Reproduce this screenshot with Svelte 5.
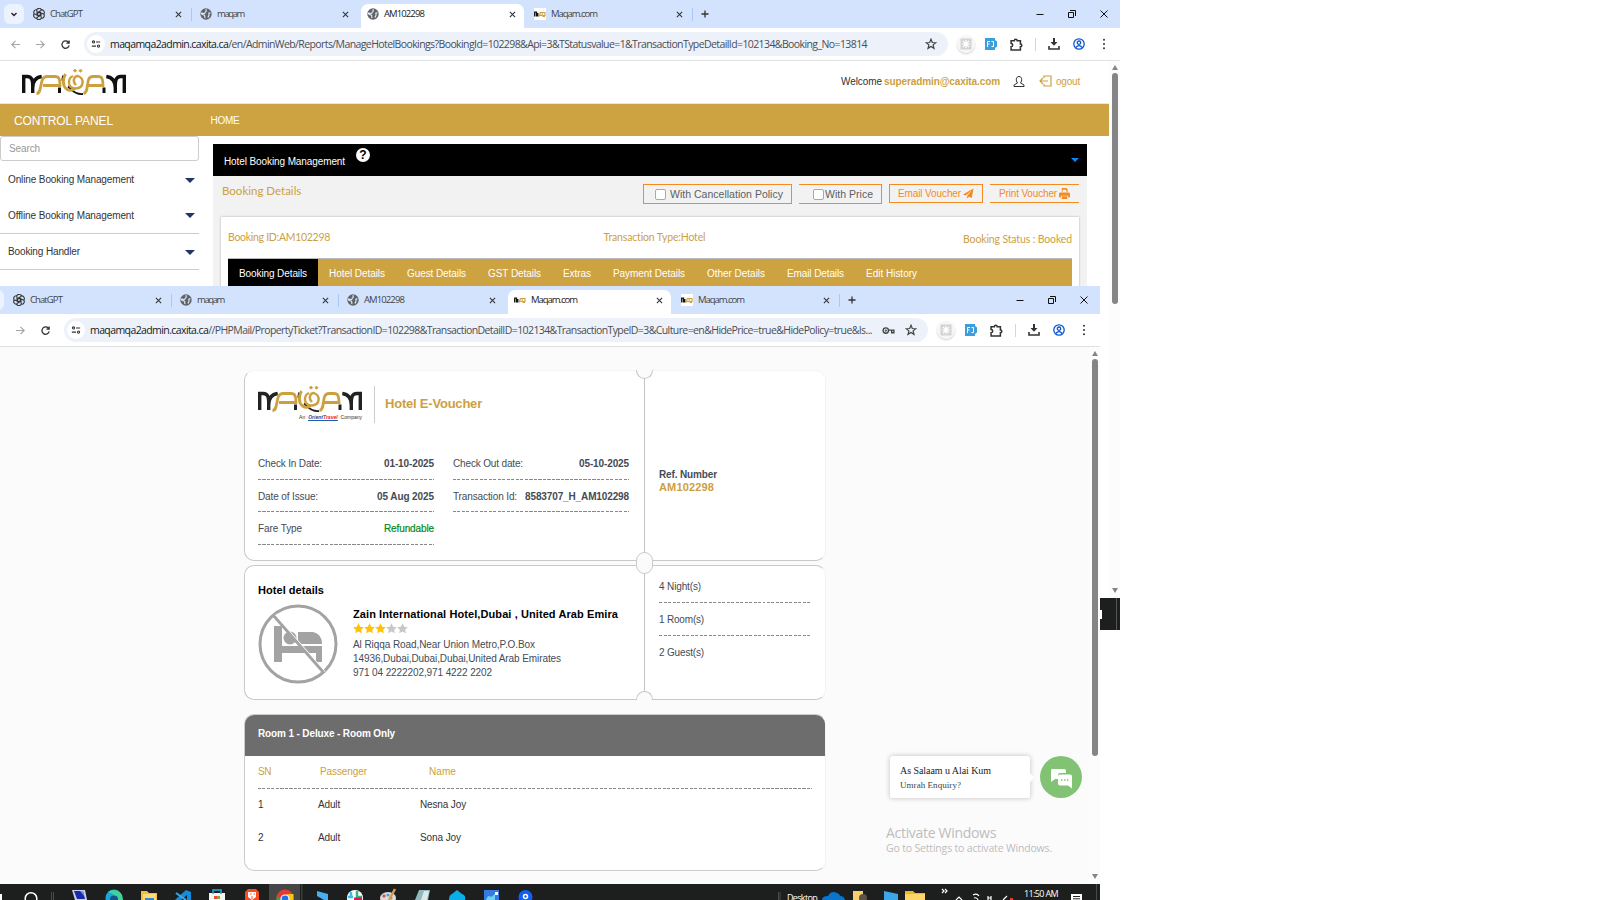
<script>
  const url1 = ['maqamqa2admin.caxita.ca', '/en/AdminWeb/Reports/ManageHotelBookings?BookingId=102298&Api=3&TStatusvalue=1&TransactionTypeDetailId=102134&Booking_No=13814'];
  const url2 = ['maqamqa2admin.caxita.ca', '//PHPMail/PropertyTicket?TransactionID=102298&TransactionDetailID=102134&TransactionTypeID=3&Culture=en&HidePrice=true&HidePolicy=true&Is...'];
  const tabs1 = [
    { t: 'ChatGPT', w: 32, i: 'gpt' }, { t: 'maqam', w: 27, i: 'globe' },
    { t: 'AM102298', w: 40, i: 'globe' }, { t: 'Maqam.com', w: 46, i: 'mq' }
  ];
  const tabs2 = [...tabs1, { t: 'Maqam.com', w: 46, i: 'mq' }];
  const menu = [['Online Booking Management', 126], ['Offline Booking Management', 126], ['Booking Handler', 72]];
  const sections = [['Booking Details', 68], ['Hotel Details', 56], ['Guest Details', 59], ['GST Details', 53], ['Extras', 28], ['Payment Details', 72], ['Other Details', 58], ['Email Details', 57], ['Edit History', 51]];
  const left = [['Check In Date:', '01-10-2025', 64, 50], ['Date of Issue:', '05 Aug 2025', 60, 57], ['Fare Type', 'Refundable', 44, 50]];
  const right = [['Check Out date:', '05-10-2025', 70, 50], ['Transaction Id:', '8583707_H_AM102298', 64, 104]];
  const address = [['Al Riqqa Road,Near Union Metro,P.O.Box', 182], ['14936,Dubai,Dubai,Dubai,United Arab Emirates', 208], ['971 04 2222202,971 4222 2202', 139]];

  // Spreads a label's letters over the given width in pixels.
  function fit(node, width) {
    const gap = width - node.getBoundingClientRect().width;
    node.style.letterSpacing = `${gap / node.textContent.length}px`;
  }
</script>

{#snippet label(text, width, cls = '')}<span class="t {cls}" use:fit={width}>{text}</span>{/snippet}

{#snippet logo(color)}
  <svg class="logo" viewBox="0 0 104 28" fill="none">
    <g stroke={color} stroke-width="3.400">
      <path d="M1.700 24V7.500h3.500c5 0 5.500 4 5.500 10M10.700 24v-5c0-7 3-10.800 9-11.500" />
      <path d="M102.300 24V7.500h-3.500c-5 0-5.500 4-5.500 10M93.300 24v-5c0-7-3-10.800-9-11.500" />
      <path d="M37.500 18.500V24M82 18.500V24" stroke-width="3" />
      <path d="M41.500 6.500c-2 3-1 6 1 9M46 17.500c3 2 6 8.500 15 7.500" stroke-width="1.900" />
    </g>
    <g stroke="#cda03f" stroke-width="2.800">
      <path d="M14.500 24.500c6.500 0 2-17 10.500-17h8c4 0 5 2.500 5 9H21" />
      <path d="M43.500 5c-3 5-3 12 1 15 3 2 6 1.500 8-.5" />
      <path d="M51 7c-5 2-6.500 12 2.500 12.500 9-.5 9-10 2.500-12.500-4 0-6 5-2 9" stroke-width="2.400" />
      <path d="M61.500 24.500c6.500-1 1-17 9.500-17h5c4 0 5 2.500 5 9H66" />
    </g>
    <path d="M53 .3l1.700 1.400L53 3.100l-1.700-1.400zM58.500.3l1.700 1.400-1.700 1.400-1.700-1.400z" fill="#cda03f" stroke="#cda03f" />
  </svg>
{/snippet}

{#snippet favicon(kind)}
  {#if kind === 'gpt'}
    <svg class="fav" viewBox="0 0 12 12" fill="none" stroke="#333" stroke-width="1.100">
      {#each [0, 60, 120, 180, 240, 300] as a}<path transform="rotate({a} 6 6)" d="M3.500 2.500a2.600 2.600 0 0 1 5-.5M4 2.500v4l2 1.200" />{/each}
    </svg>
  {:else if kind === 'globe'}
    <svg class="fav" viewBox="0 0 12 12"><circle cx="6" cy="6" r="5.700" fill="#5f6368" /><path d="M6.500 1.300c-1.500 1.200.8 1.700-.8 2.500-1.200.5 0 1.800-1.700 1.700-1 0-1.500-.6-2.700-.3.500 2 1.500 1.300 2.700 1.700 1.200.6 1 1.500.8 3.200M10.500 5c-1.500-.5-2 .2-1.500 1.200S8.500 8 8 9.500" stroke="#dfe8f8" stroke-width="1.200" fill="none" /></svg>
  {:else}
    <svg class="fav" viewBox="0 0 12 12"><path d="M0 0h12v12H0z" fill="#fff" /><path d="M.7 8.500V4.200h1.800v4.300M3.800 8.500V5" stroke="#111" stroke-width="1.300" fill="none" /><path d="M5.300 8.500l1-4h1.900v3H6M8.700 4.500h2.300v3H9M8.500 8.500H11" stroke="#cda03f" stroke-width="1.100" fill="none" /></svg>
  {/if}
{/snippet}

{#snippet chrome(tabs, active, url, urlWidth, key)}
  <div class="tabbar">
    <div class="chev"><svg viewBox="0 0 10 10"><path d="M2.500 4 5 6.500 7.500 4" fill="none" stroke="#222" stroke-width="1.400" /></svg></div>
    {#each tabs as tab, i}
      <div class="tab" class:active={i === active} class:rule={i !== active && i !== active - 1}>
        {@render favicon(tab.i)}
        {@render label(tab.t, tab.w)}
        <svg class="x" viewBox="0 0 8 8"><path d="M1 1l6 6M7 1 1 7" stroke="#333" stroke-width="1.200" /></svg>
      </div>
    {/each}
    <svg class="plus" viewBox="0 0 8 8"><path d="M4 .5v7M.5 4h7" stroke="#333" stroke-width="1.300" /></svg>
    <div class="controls">
      <svg viewBox="0 0 8 8"><path d="M.5 4.500h7" stroke="#111" /></svg>
      <svg viewBox="0 0 8 8" fill="none" stroke="#111"><path d="M.5 2.500h5v5h-5zM2 .5h5.500v5.500" /></svg>
      <svg viewBox="0 0 8 8"><path d="M.5.5l7 7M7.500.5l-7 7" stroke="#111" /></svg>
    </div>
  </div>
  <div class="toolbar">
    <div class="nav">
      <svg viewBox="0 0 12 12" stroke="#a4a6a9" fill="none" stroke-width="1.300"><path d="M11 6H2M6 2 2 6l4 4" /></svg>
      <svg viewBox="0 0 12 12" stroke="#a4a6a9" fill="none" stroke-width="1.300"><path d="M1 6h9M6 2l4 4-4 4" /></svg>
      <svg viewBox="0 0 12 12" stroke="#333" fill="none" stroke-width="1.400"><path d="M9.500 4A4 4 0 1 0 10 7M10 1.500v3H7" /></svg>
    </div>
    <div class="omni">
      <div class="tune"><svg viewBox="0 0 12 12" fill="none" stroke="#333" stroke-width="1.300"><circle cx="3" cy="3.500" r="1.300" /><path d="M6 3.500h5M1 8.500h5" /><circle cx="9" cy="8.500" r="1.300" /></svg></div>
      <span class="t url" use:fit={urlWidth}><b>{url[0]}</b>{url[1]}</span>
      {#if key}<svg class="key" viewBox="0 0 14 10" fill="none" stroke="#444" stroke-width="1.500"><circle cx="4" cy="5" r="3" /><circle cx="4" cy="5" r=".5" /><path d="M7 4.500h6v3h-2.500V5" /></svg>{/if}
      <svg class="star" viewBox="0 0 12 12" fill="none" stroke="#444" stroke-width="1.200"><path d="M6 1.200 7.300 4.500l3.500.2-2.700 2.200.9 3.400L6 8.400l-3 1.900.9-3.400L1.200 4.700l3.500-.2z" /></svg>
    </div>
    <div class="tools">
      <svg class="ghost" viewBox="0 0 18 18"><circle cx="9" cy="9" r="9" fill="#f6f6f6" /><path d="M3.500 3.500h11v11h-11z" fill="#d4d4d4" /><path d="M9 5v8M5 9h8M6 6l6 6M12 6l-6 6" stroke="#fff" stroke-width="1.200" /></svg>
      <svg class="fj" viewBox="0 0 12 12"><path d="M0 0h10v2l2 1.500v5L10 10v2H0z" fill="#3c9fdc" /><path d="M2.500 9V3.500H5M2.500 6h2M6.500 3.500h2v5h-2" stroke="#fff" fill="none" /></svg>
      <svg class="puz" viewBox="0 0 12 12" fill="none" stroke="#333" stroke-width="1.400"><path d="M1 2.500h3a1.300 1.300 0 0 1 2.600 0h3v3a1.300 1.300 0 0 1 0 2.600V11H1V8a1.500 1.500 0 0 0 0-3z" /></svg>
      <i></i>
      <svg class="dl" viewBox="0 0 12 12" fill="#333"><path d="M5 0h2v4h2.500L6 7.800 2.500 4H5z" /><path d="M1 8v3h10V8" fill="none" stroke="#333" stroke-width="1.600" /></svg>
      <svg class="me" viewBox="0 0 12 12" fill="none" stroke="#0b57d0" stroke-width="1.300"><circle cx="6" cy="6" r="5.200" /><circle cx="6" cy="4.700" r="1.700" /><path d="M2.800 9.500c2-2.500 4.400-2.500 6.400 0" /></svg>
      <svg class="dots" viewBox="0 0 4 12" fill="#333"><circle cx="2" cy="1.800" r="1" /><circle cx="2" cy="6" r="1" /><circle cx="2" cy="10.200" r="1" /></svg>
    </div>
  </div>
{/snippet}

{#snippet field(f, cls = '')}
  <div class="field">{@render label(f[0], f[2])}{@render label(f[1], f[3], 'strong ' + cls)}</div>
{/snippet}

<div class="desktop">
  <section class="window first">
    {@render chrome(tabs1, 2, url1, 757, false)}
    <div class="body">
      <div class="site">
        <header>
          {@render logo('#111')}
          <div class="user">
            {@render label('Welcome', 41)}{@render label('superadmin@caxita.com', 116, 'mail')}
            <svg class="person" viewBox="0 0 12 12" fill="none" stroke="#333"><path d="M4.500 7.500C2.500 5 3 1 6 1s3.500 4 1.500 6.500l3.500 2v1.500H1V9.500z" /></svg>
            <svg class="out" viewBox="0 0 13 12" fill="none" stroke="#cda03f" stroke-width="1.200"><path d="M5 3V1h7v10H5V9M9 6H1M4 3 1 6l3 3" /></svg>
            {@render label('ogout', 24, 'gold')}
          </div>
        </header>
        <div class="band">{@render label('CONTROL PANEL', 99, 'cp')}{@render label('HOME', 29)}</div>
        <div class="cols">
          <aside>
            <div class="search">{@render label('Search', 31)}</div>
            {#each menu as m, i}
              <div class="item" class:line={i > 0}>{@render label(m[0], m[1])}<i></i></div>
            {/each}
          </aside>
          <main>
            <div class="black">{@render label('Hotel Booking Management', 121)}<b>?</b><i></i></div>
            <div class="actions">
              {@render label('Booking Details', 78, 'head')}
              <div class="btn b1"><i></i>{@render label('With Cancellation Policy', 113)}</div>
              <div class="btn b2"><i></i>{@render label('With Price', 48)}</div>
              <div class="btn b3">{@render label('Email Voucher', 63)}<svg viewBox="0 0 12 12" fill="#f58a1f"><path d="M11.500.5 0 7l3 1.300L9 3 4.500 9v2.500l2-2 3 1.500z" /></svg></div>
              <div class="btn b4">{@render label('Print Voucher', 58)}<svg viewBox="0 0 12 12" fill="#f58a1f"><path d="M3 0h5l1.500 1.500V4H8V2H4v2H3zM1 5h10l1 1v4h-2V8.500H2V10H0V6zM3 9h6v3H3z" /></svg></div>
            </div>
            <div class="card">
              <div class="facts">{@render label('Booking ID:AM102298', 102)}{@render label('Transaction Type:Hotel', 102)}{@render label('Booking Status : Booked', 109, 'low')}</div>
              <nav>{#each sections as s, i}<div class:on={i === 0}>{@render label(s[0], s[1])}</div>{/each}</nav>
            </div>
          </main>
        </div>
      </div>
      <div class="scroll s1"><i class="up"></i><b></b><i class="down"></i></div>
    </div>
  </section>
  <div class="stub"><i></i><b></b></div>

  <section class="window second">
    <div class="shift">{@render chrome(tabs2, 3, url2, 782, true)}</div>
    <div class="body">
      <div class="page">
        <article class="ticket one">
          <div class="main">
            <div class="brand">
              <div class="mark">{@render logo('#222')}<small><span>An</span><em><u>Orient</u><s>Travel</s></em><span>Company</span></small></div>
              {@render label('Hotel E-Voucher', 97, 'title')}
            </div>
            <div class="fields">
              <div>{#each left as f, i}{@render field(f, i === 2 ? 'green' : '')}{/each}</div>
              <div>{#each right as f}{@render field(f)}{/each}</div>
            </div>
          </div>
          <div class="side ref">{@render label('Ref. Number', 58, 'strong')}{@render label('AM102298', 55, 'num')}</div>
        </article>
        <article class="ticket two">
          <div class="main">
            {@render label('Hotel details', 66, 'h')}
            <div class="hotel">
              <svg viewBox="0 0 80 80" fill="#a3a3a3"><circle cx="40" cy="40" r="38" fill="none" stroke="#a3a3a3" stroke-width="3" /><path d="M16 22h8v20h40v16h-6v-9H24v9h-8z" /><circle cx="32" cy="34" r="6.500" /><path d="M40 28h15q9 2 9 12H40z" /><path d="M17 11 67 68" stroke="#fff" stroke-width="1.500" /><path d="M15 11 66 69" stroke="#a3a3a3" stroke-width="2.800" /></svg>
              <div class="desc">
                {@render label('Zain International Hotel,Dubai , United Arab Emira', 265, 'h')}
                <div class="stars">{#each [1, 1, 1, 0, 0] as on}<svg viewBox="0 0 12 12" fill={on ? '#ffc107' : '#c8c8c8'}><path d="M6 .3 7.800 4l4 .5-2.900 2.800.7 4L6 9.400 2.400 11.300l.7-4L.2 4.500l4-.5z" /></svg>{/each}</div>
                {#each address as a}<p>{@render label(a[0], a[1])}</p>{/each}
              </div>
            </div>
          </div>
          <div class="side"><p>{@render label('4 Night(s)', 42)}</p><p>{@render label('1 Room(s)', 45)}</p><p>{@render label('2 Guest(s)', 45)}</p></div>
          <span class="notch top"></span><span class="notch mid"></span><span class="notch end"></span>
        </article>
        <article class="room">
          <h3>{@render label('Room 1 - Deluxe - Room Only', 137)}</h3>
          <div class="row hd"><span>{@render label('SN', 13)}</span><span>{@render label('Passenger', 47)}</span><span>{@render label('Name', 27)}</span></div>
          <div class="row"><span>1</span><span>{@render label('Adult', 22)}</span><span>{@render label('Nesna Joy', 46)}</span></div>
          <div class="row"><span>2</span><span>{@render label('Adult', 22)}</span><span>{@render label('Sona Joy', 41)}</span></div>
        </article>
      </div>
      <div class="scroll s2"><i class="up"></i><b></b><i class="down"></i></div>
    </div>
    <div class="bubble">{@render label('As Salaam u Alai Kum', 91)}{@render label('Umrah Enquiry?', 61, 'sub')}</div>
    <svg class="chat" viewBox="0 0 42 42"><circle cx="21" cy="21" r="21" fill="#82c274" /><path d="M12 13h12q2 0 2 2v2h-6q-2 0-2 2v4h-3l-4 3V15q0-2 1-2z" fill="#fff" /><path d="M20 18.500h10q2 0 2 2v12l-4-3h-8q-2 0-2-2v-7q0-2 2-2z" fill="#fff" /><path d="M21 24h1.500m1.500 0h1.500m1.500 0h1.500" stroke="#82c274" stroke-width="1.500" /></svg>
    <div class="activate">{@render label('Activate Windows', 110, 'big')}{@render label('Go to Settings to activate Windows.', 166)}</div>
    <footer>
      <svg viewBox="0 0 1100 16" width="1100" height="16">
        <path d="M0 10h2v6H0z" fill="#fff" /><circle cx="31" cy="14.500" r="5.800" fill="none" stroke="#fff" stroke-width="1.500" />
        <path d="M51.500 8v8M53.500 8v8M778.500 8v8M780 8v8M1096.500 0v16" stroke="#555" stroke-width=".8" />
        <path d="M269 0h31v16h-31z" fill="#454746" /><path d="M301 0h1.500v16H301z" fill="#3a3c3b" />
        <path d="M72 6h13l2 10H75z" fill="#c9d0e8" /><path d="M74 7h9l2 8h-8z" fill="#1929ad" /><path d="M80 7h3l1 5z" fill="#7d95e8" />
        <circle cx="114" cy="14" r="8.500" fill="#1ca5dc" /><path d="M108 8q8-5 14 3l1 5h-7q0-6-8-8z" fill="#43d293" /><ellipse cx="114" cy="15" rx="4" ry="3.500" fill="#14548d" />
        <path d="M141 7h6l2 2h8v7h-16z" fill="#f5bd3d" /><path d="M143 10h13v6h-13z" fill="#ffdc75" /><path d="M145 14h9v2h-9z" fill="#2e8ad0" />
        <path d="M186 6l5 2v8h-4v-5l-6 5h-6l2-2z" fill="#168bd9" /><path d="M176 9l10 7" stroke="#38a8ee" stroke-width="2" />
        <path d="M209 9h16v7h-16z" fill="#f5f5f5" /><path d="M213 10V6h8v4" stroke="#20aee5" fill="none" stroke-width="1.500" /><path d="M214 12h3v3h-3z" fill="#ed4e27" /><path d="M217 12h3v3h-3z" fill="#72b62e" />
        <path d="M245 8l3-3h8l3 3v8h-14z" fill="#fa4c20" /><path d="M248 8h8v5l-4 3-4-3z" fill="#fff" /><path d="M250 10h1.500m2 0h1.500M252 12v3" stroke="#fa4c20" />
        <circle cx="285" cy="14" r="8.500" fill="#e33b2e" /><path d="M287 10h6.500v6H287z" fill="#f8c51d" /><path d="M276.500 12.500l6 3.500h-6z" fill="#29a653" /><circle cx="285" cy="15" r="4" fill="#1a73e8" stroke="#fff" stroke-width="1.200" />
        <path d="M317 7l11 3v6h-4l-7-4z" fill="#4aaff0" />
        <circle cx="355" cy="14" r="8" fill="#fff" /><path d="M351 8v5M348 13h5" stroke="#36bde8" stroke-width="2.500" /><path d="M357 7v6h5" stroke="#2eb67d" stroke-width="2.500" fill="none" /><path d="M354 15h8" stroke="#df1455" stroke-width="3" />
        <ellipse cx="388" cy="14" rx="8" ry="6" fill="#d9dedf" /><circle cx="384" cy="12" r="1.700" fill="#df5b3a" /><circle cx="388" cy="11" r="1.500" fill="#4a9edb" /><circle cx="391" cy="14" r="1.500" fill="#58ae54" /><path d="M389 16l6-11" stroke="#d69a51" stroke-width="2.500" />
        <path d="M419 6h11l-2 10h-13z" fill="#90b9bd" /><path d="M424 7h5l-2 9h-6z" fill="#dce9e8" />
        <path d="M449 16q0-5 3-6l5-4 5 4q4 1 3 6z" fill="#0aaee8" />
        <rect x="484" y="6" width="15" height="12" fill="#3679e2" /><path d="M486 16q2-6 5-3l4-3v6z" fill="#70cef2" /><path d="M495 8h3v3h-3z" fill="#fff" />
        <circle cx="525.500" cy="13" r="7" fill="#125ff2" /><circle cx="525.500" cy="12.500" r="2" fill="none" stroke="#fff" stroke-width="1.500" />
        <path d="M822 16q0-4 6-4 3-6 9-3 3 1 3 3 4 0 5 4z" fill="#0875cf" />
        <path d="M853 7h10v9h-10z" fill="#f5d06b" /><circle cx="863" cy="14" r="4" fill="#5d5348" /><path d="M884 7l14 3v6h-14z" fill="#3ba7e9" />
        <path d="M905 7h8l2 2h10v7h-20z" fill="#f5b51e" /><path d="M905 10h20v6h-20z" fill="#ffd567" />
        <g fill="none" stroke="#fff" stroke-width="1.200"><path d="M942 5l2 2-2 2M945 5l2 2-2 2M956 16l3-3 3 3M973 11q4-2 6 1M974 14q3-1 4 2M988 12v4M991 12v4M988 14h3M1003 16l4-4" /></g><path d="M1010 14h3v2h-3z" fill="#e33" />
        <path d="M1071 10h11v6h-11z" fill="#fff" /><path d="M1073 12.500h7M1073 14.800h7" stroke="#222" />
      </svg>
      <div class="tray">{@render label('Desktop', 30)}{@render label('11:50 AM', 34, 'time')}</div>
    </footer>
  </section>
</div>

<style>
  :global(body) { margin: 0; background: #fff; }
  .desktop { position: relative; width: 1600px; height: 900px; overflow: hidden; background: #fff; font: 10px/12px "Liberation Sans", Arial, sans-serif; color: #444b55; }
  .desktop :global(*) { box-sizing: border-box; }
  .t { display: inline-block; white-space: pre; flex: none; }
  svg { display: block; flex: none; }
  .window { position: absolute; overflow: hidden; background: #fff; display: flex; flex-direction: column; }
  .first { left: 0; top: 0; width: 1120px; height: 598px; }
  .second { left: 0; top: 286px; width: 1100px; height: 614px; }
  .shift { width: 1120px; margin-left: -20px; }
  .stub { position: absolute; left: 1100px; top: 598px; width: 20px; height: 32px; background: #1d1f1e; display: flex; justify-content: space-between; align-items: center; }
  .stub i { width: 2px; height: 9px; background: #fff; }
  .stub b { width: 1px; height: 32px; background: #555; margin-right: 3px; }

  .tabbar { height: 28px; background: #d3e3fd; display: flex; align-items: center; padding-left: 4px; font: 9.500px/14px "Open Sans", sans-serif; color: #444; }
  .chev { width: 20px; height: 20px; border-radius: 6px; background: #edf3fe; padding: 5px; }
  .tab { width: 167px; height: 28px; display: flex; align-items: center; padding-left: 9px; gap: 5px; position: relative; }
  .tab.rule::after { content: ""; width: 1px; height: 13px; background: #a8c7fa; position: absolute; right: -1px; top: 8px; }
  .tab.active { color: #222; z-index: 1; }
  .tab.active::before { content: ""; position: absolute; z-index: -1; left: 3px; right: 1px; top: 4px; bottom: 0; background: #fff; border-radius: 7px 7px 0 0; }
  .fav { width: 12px; height: 12px; }
  .tab .x { width: 7px; height: 7px; margin-left: auto; margin-right: 9px; }
  .plus { width: 8px; height: 8px; margin-left: 9px; }
  .controls { display: flex; gap: 24px; margin-left: auto; margin-right: 12px; }
  .controls svg { width: 8px; height: 8px; }
  .toolbar { height: 33px; display: flex; align-items: center; background: #fff; border-bottom: 1px solid #dfe1e5; padding: 0 11px 0 10px; }
  .nav { display: flex; gap: 14px; width: 74px; }
  .nav svg { width: 11px; height: 11px; }
  .omni { width: 864px; height: 24px; border-radius: 12px; background: #edf1fa; display: flex; align-items: center; padding: 0 11px 0 3px; }
  .tune { width: 18px; height: 18px; border-radius: 9px; background: #fff; padding: 4px; margin-right: 5px; }
  .tune svg { width: 10px; height: 10px; }
  .url { font: 10.500px/14px "Open Sans", sans-serif; color: #4a4e53; }
  .url b { font-weight: 400; color: #16181a; }
  .key { width: 13px; height: 9px; margin-left: auto; }
  .star { width: 12px; height: 12px; margin-left: auto; }
  .key + .star { margin-left: 10px; }
  .tools { display: flex; align-items: center; flex: 1; padding-left: 9px; }
  .ghost { width: 18px; height: 18px; border-radius: 9px; box-shadow: 0 1px 2px #ccc; }
  .fj { width: 12px; height: 12px; margin-left: 10px; }
  .puz { width: 13px; height: 13px; margin-left: 13px; }
  .tools i { width: 1px; height: 13px; background: #c5d9f8; margin-left: 12px; }
  .dl { width: 12px; height: 12px; margin-left: 12px; }
  .me { width: 12px; height: 12px; margin-left: 13px; }
  .dots { width: 4px; height: 12px; margin-left: auto; margin-right: 3px; }

  .body { flex: 1; display: flex; min-height: 0; }
  .site { width: 1109px; }
  header { height: 43px; border-bottom: 1px solid #e7e7e7; display: flex; justify-content: space-between; padding: 8px 29px 0 22px; }
  .logo { width: 104px; height: 28px; }
  .user { display: flex; align-items: center; height: 26px; font-size: 10px; color: #333; }
  .user .mail { font-weight: 700; color: #cda03f; margin-left: 2px; }
  .gold { color: #cda03f; }
  .person { width: 12px; height: 13px; margin-left: 13px; margin-top: -2px; }
  .out { width: 13px; height: 12px; margin: -3px 4px 0 14px; }
  .band { height: 32px; background: #cda240; color: #fff; display: flex; align-items: center; padding: 1px 0 0 14px; gap: 97.500px; }
  .band .cp { font-size: 12px; }
  .cols { display: flex; }
  aside { width: 199px; color: #333; font-size: 10px; }
  .search { height: 25px; border: 1px solid #ccc; border-radius: 3px; color: #999; padding: 6px 8px; }
  .item { height: 36px; display: flex; justify-content: space-between; align-items: center; padding: 2px 4px 0 8px; }
  .item.line { border-bottom: 1px solid #ccc; height: 36.500px; }
  .item i { border: 5px solid transparent; border-top-color: #203763; border-bottom: 0; }
  main { width: 874px; margin: 8px 0 0 14px; background: #f2f2f2; height: 300px; }
  .black { height: 32px; background: #000; color: #fff; display: flex; align-items: center; padding: 3px 8px 0 11px; font-size: 10px; }
  .black b { width: 14px; height: 14px; border-radius: 7px; background: #fff; color: #000; text-align: center; line-height: 14px; font-size: 12px; margin: -14px 0 0 11px; }
  .black i { border: 4px solid transparent; border-top-color: #0a84ff; border-bottom: 0; margin: -3px 0 0 auto; }
  .actions { height: 41px; display: flex; align-items: flex-start; padding: 8px 8px 0 9px; color: #cda03f; }
  .actions .head { font: 11.500px/14px Lato, sans-serif; width: 78px; }
  .btn { height: 20px; border: 1px solid #f58a1f; display: flex; align-items: center; color: #f58a1f; font-size: 10px; }
  .b1, .b2 { color: #5b5f66; font-size: 10.500px; }
  .btn i { width: 11px; height: 11px; border: 1.500px solid #aaa; border-radius: 2px; background: #fff; }
  .btn svg { width: 11px; height: 11px; }
  .b1 { width: 149px; margin-left: 343px; padding-left: 11px; gap: 4px; }
  .b2 { width: 83px; margin-left: 7px; padding-left: 14px; gap: 1px; border-left: 0; }
  .b3 { width: 94px; height: 19px; margin-left: 7px; padding-left: 8px; gap: 2px; }
  .b4 { width: 89px; height: 19px; margin-left: 7px; padding-left: 9px; border-left: 0; border-right: 0; gap: 2px; }
  .card { margin: 0 8px; height: 227px; background: #fff; box-shadow: 0 0 2px #aaa; padding: 0 7px; }
  .facts { height: 41px; display: flex; justify-content: space-between; align-items: center; font: 10.500px/14px Lato, sans-serif; color: #cda03f; }
  .facts .low { padding-top: 2px; }
  .facts .t:nth-child(2) { margin-left: 24px; margin-right: 8px; }
  .facts .t:not(.low) { margin-top: -1px; }
  nav { height: 60px; background: #cda240; color: #fff; display: flex; border-top: 1px solid #bbb; }
  nav div { height: 60px; padding: 9px 11px; }
  nav div.on { background: #000; }
  .scroll { flex: 1; background: #fcfcfc; display: flex; flex-direction: column; align-items: center; }
  .scroll i { border: 3px solid transparent; }
  .scroll .up { border-bottom: 5px solid #858585; border-top: 0; margin-top: 4px; }
  .scroll .down { border-top: 5px solid #858585; border-bottom: 0; margin: auto 0 5px; }
  .scroll b { width: 6px; border-radius: 3px; background: #858585; margin-top: 3px; }
  .s1 b { height: 231px; }
  .s2 b { height: 397px; margin-top: 3px; }

  .second .body { background: #fbfbfb; }
  .page { width: 1089px; padding: 23px 0 0 244px; }
  .ticket { position: relative; width: 582px; display: flex; background: #fff; border: 1px solid #c8c8c8; border-radius: 10px; }
  .one { height: 191px; border-top-color: #f5f5f5; border-right-color: #f3f3f3; }
  .two { height: 135px; margin-top: 4px; border-right-color: #f3f3f3; }
  .main { width: 400px; border-right: 1px solid #c4c4c4; padding: 0 13px; }
  .side { padding: 11px 13px 0 14px; flex: 1; }
  .brand { display: flex; height: 83px; padding-top: 15px; }
  .mark { width: 117px; height: 37px; border-right: 1px solid #ccc; margin-right: 10px; }
  .mark small { display: flex; gap: 3px; font-size: 5px; line-height: 5px; justify-content: flex-end; margin: 1px 12px 0 0; color: #333; }
  .mark em { font-weight: 700; border-bottom: 1px solid #1b5fa8; }
  .mark u, .mark s { text-decoration: none; color: #164c9b; }
  .mark s { color: #e22; }
  .title { font-size: 13px; font-weight: 700; color: #cda03f; padding-top: 12px; }
  .fields { display: grid; grid-template-columns: 176px 176px; gap: 19px; }
  .field { height: 32.700px; display: flex; justify-content: space-between; padding-top: 4px; background: repeating-linear-gradient(90deg, #888 0 3px, transparent 3px 4.500px) left bottom 7px / 100% 1px no-repeat; }
  .strong { font-weight: 700; }
  .green { color: #008a20; font-weight: 400; -webkit-text-stroke: .2px #008a20; }
  .side.ref { padding-top: 98px; display: flex; flex-direction: column; align-items: flex-start; }
  .ref .num { font-size: 11px; font-weight: 700; color: #cda03f; }
  .h { color: #000; font-weight: 700; font-size: 11px; }
  .two .main { padding-top: 18px; }
  .hotel { display: flex; gap: 15px; margin-top: 7px; }
  .hotel > svg { width: 80px; height: 80px; }
  .desc .h { margin-top: 4px; height: 13px; }
  .stars { display: flex; margin: 2px 0 4px; }
  .stars svg { width: 11px; height: 11px; }
  .desc p { margin: 0; height: 14px; line-height: 14px; }
  .side p { margin: 0 0 6px; height: 27px; padding-top: 4px; background: repeating-linear-gradient(90deg, #888 0 3px, transparent 3px 4.500px) left bottom 1px / 100% 1px no-repeat; }
  .side p:last-child { background: none; }
  .notch { position: absolute; left: 391px; width: 17px; background: #fbfbfb; border: 1px solid #c8c8c8; }
  .top { top: -196px; height: 9px; border-top: 0; border-radius: 0 0 9px 9px; }
  .mid { top: -14px; height: 22px; border-radius: 9px; }
  .end { bottom: -1px; height: 9px; border-bottom: 0; border-radius: 9px 9px 0 0; }
  .room { margin-top: 14px; width: 582px; height: 157px; background: #fff; border: 1px solid #ccc; border-right-color: #f3f3f3; border-radius: 10px; overflow: hidden; }
  .room h3 { margin: -1px -1px 0; height: 42px; background: #6d6d6d; color: #fff; font-size: 10px; padding: 14px; }
  .row { height: 33px; display: flex; padding-top: 10px; margin: 0 13px; color: #333; }
  .row > span:first-child { width: 60px; }
  .row > span:nth-child(2) { width: 102px; }
  .row.hd { color: #cda03f; background: repeating-linear-gradient(90deg, #888 0 3px, transparent 3px 4.500px) left bottom 0 / 100% 1px no-repeat; }
  .row.hd > span:first-child { width: 62px; }
  .row.hd > span:nth-child(2) { width: 109px; }
  .bubble { position: absolute; left: 890px; top: 470px; width: 140px; height: 42px; background: #fff; border-radius: 3px; box-shadow: 0 0 5px #bbb; padding: 8px 10px; font: 10px/14px "Liberation Serif", serif; color: #222; display: flex; flex-direction: column; align-items: flex-start; }
  .bubble::after { content: ""; position: absolute; right: -3px; top: 18px; width: 7px; height: 7px; background: #fff; transform: rotate(45deg); }
  .bubble .sub { font-size: 9px; color: #444; }
  .chat { position: absolute; left: 1040px; top: 470px; width: 42px; height: 42px; }
  .activate { position: absolute; left: 886px; top: 538px; display: flex; flex-direction: column; align-items: flex-start; color: #bdbdbd; font: 10.500px/14px "Open Sans", sans-serif; }
  .activate .big { font-size: 14px; line-height: 17px; }
  footer { position: relative; height: 16px; background: #1d1f1e; overflow: hidden; }
  .tray { position: absolute; left: 787px; top: 3px; display: flex; gap: 207px; color: #fff; font: 9px/14px "Open Sans", sans-serif; align-items: flex-start; }
  .tray .t:first-child { padding-top: 4px; }
</style>
